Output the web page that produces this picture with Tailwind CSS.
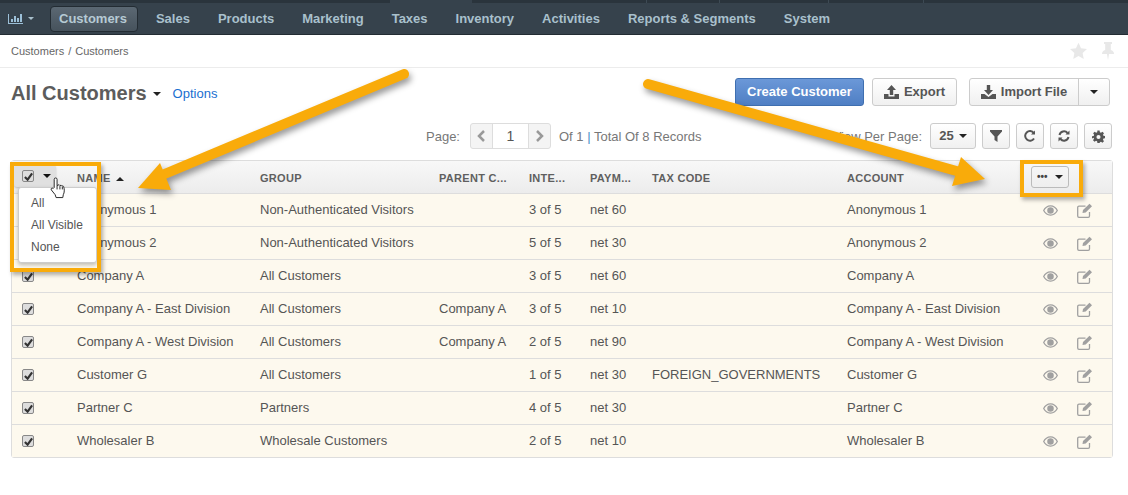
<!DOCTYPE html>
<html lang="en">
<head>
    <meta charset="utf-8">
    <title>All Customers</title>
    <script src="https://cdn.jsdelivr.net/npm/@tailwindcss/browser@4"></script>
</head>
<body class="bg-white font-['Liberation_Sans',Arial,sans-serif] text-[13px] text-[#555]">
<div class="relative w-[1128px] h-[495px] overflow-hidden">
    <!-- strip above the nav -->
    <div class="h-[3px] flex bg-[#2a343c]">
        <span class="w-[390px]"></span>
        <span class="w-[82px] bg-[#36424c]"></span>
        <span class="w-[175px] border-r border-[#3d4a54]"></span>
        <span class="w-[73px] border-r border-[#3d4a54]"></span>
        <span class="w-[109px] border-r border-[#3d4a54]"></span>
        <span class="w-[95px] border-r border-[#3d4a54]"></span>
    </div>
    <!-- top nav -->
    <nav class="h-[32px] bg-[#36424c] border-b border-[#232c33] flex items-center pl-[8px] font-bold text-[13px] text-[#a9c0cc]">
        <svg class="w-[15px] h-[10px] text-[#9cc0d8]" viewBox="0 0 15 10" fill="currentColor"><path d="M0 0h1v9h14v1H0zM3 5h2v3H3zM6 2h2v6H6zM9 4h2v4H9zM12 0h2v8h-2z"/></svg>
        <span class="ml-[5px] w-0 h-0 border-x-[3px] border-x-transparent border-t-[3px] border-t-[#a9c0cc]"></span>
        <span class="ml-[16px] h-[26px] pl-[8px] pr-[10px] flex items-center rounded-[4px] bg-gradient-to-b from-[#5b6873] to-[#46525c] border border-[#232c33] text-[#b6cad4]">Customers</span>
        <span class="ml-[18px]">Sales</span>
        <span class="ml-[28px]">Products</span>
        <span class="ml-[28px]">Marketing</span>
        <span class="ml-[28px]">Taxes</span>
        <span class="ml-[28px]">Inventory</span>
        <span class="ml-[28px]">Activities</span>
        <span class="ml-[28px]">Reports &amp; Segments</span>
        <span class="ml-[28px]">System</span>
    </nav>

    <!-- breadcrumb -->
    <div class="h-[33px] border-b border-[#ececec] flex items-center justify-between pl-[11px] pr-[13px] text-[11px] text-[#666]">
        <span>Customers<span class="mx-[4px]">/</span>Customers</span>
        <div class="flex items-center gap-[13px] text-[#e8e8e8]">
            <svg class="w-[19px] h-[18px]" viewBox="0 0 24 24" fill="currentColor"><path d="M12 1l3.400 7.300 7.900 1-5.800 5.400 1.500 7.900L12 18.700l-7 3.900 1.500-7.900L.7 9.300l7.900-1z"/></svg>
            <svg class="w-[14px] h-[18px]" viewBox="0 0 14 18" fill="currentColor"><path d="M3 0h8v2H9.800v6c2 .6 3.200 2 3.200 4H8l-1 6-1-6H1c0-2 1.200-3.400 3.200-4V2H3z"/></svg>
        </div>
    </div>

    <!-- title row -->
    <div class="h-[47px] flex items-center pl-[11px] pr-[18px]">
        <span class="font-bold text-[20px] text-[#5c5c5c] mt-[2px]">All Customers</span>
        <span class="ml-[6px] mt-[5px] w-0 h-0 border-x-[4px] border-x-transparent border-t-[4px] border-t-[#222]"></span>
        <a class="ml-[12px] mt-[4px] text-[#1a6fd0] text-[13px]">Options</a>
        <div class="ml-auto flex items-center">
            <button class="h-[28px] w-[129px] rounded-[3px] border border-[#3f6fb0] bg-gradient-to-b from-[#6b98d8] to-[#4f7fc4] text-white font-bold text-[13px]">Create Customer</button>
            <button class="ml-[8px] h-[28px] w-[85px] rounded-[3px] border border-[#ccc] bg-gradient-to-b from-white to-[#f0f0f0] flex items-center justify-center gap-[5px] text-[#555] font-bold text-[13px]">
                <svg class="w-[15px] h-[14px]" viewBox="0 0 15 14" fill="currentColor"><path d="M7.500 0l4.500 5H9.200v5H5.800V5H3zM0 9h4.500v2.500h6V9H15v5H0z"/></svg>Export
            </button>
            <div class="ml-[12px] h-[28px] w-[141px] flex rounded-[3px] border border-[#ccc] bg-gradient-to-b from-white to-[#f0f0f0] text-[#555] font-bold text-[13px]">
                <span class="w-[109px] flex items-center justify-center gap-[5px] border-r border-[#ccc]">
                    <svg class="w-[15px] h-[14px]" viewBox="0 0 15 14" fill="currentColor"><path d="M5.800 0h3.400v5H12L7.500 10 3 5h2.800zM0 9h3.500l4 3 4-3H15v5H0z"/></svg>Import File
                </span>
                <span class="flex-1 flex items-center justify-center"><span class="w-0 h-0 border-x-[4px] border-x-transparent border-t-[4px] border-t-[#222]"></span></span>
            </div>
        </div>
    </div>

    <!-- pager row -->
    <div class="h-[42px] flex items-center pr-[16px] text-[13px] text-[#777]">
        <span class="ml-[426px] mt-[2px]">Page:</span>
        <div class="ml-[10px] h-[26px] w-[81px] flex rounded-[3px] border border-[#ddd] bg-[#f4f4f4] text-[#999]">
            <span class="w-[21px] flex items-center justify-center">
                <svg class="w-[9px] h-[12px]" viewBox="0 0 9 12" fill="none" stroke="currentColor" stroke-width="2.500"><path d="M7 1L2 6l5 5"/></svg>
            </span>
            <span class="flex-1 bg-white border-x border-[#ddd] flex items-center justify-center text-[#555] text-[14px]">1</span>
            <span class="w-[21px] flex items-center justify-center">
                <svg class="w-[9px] h-[12px]" viewBox="0 0 9 12" fill="none" stroke="currentColor" stroke-width="2.500"><path d="M2 1l5 5-5 5"/></svg>
            </span>
        </div>
        <span class="ml-[8px] mt-[2px]">Of 1 <span class="text-[#4a90c8]">|</span> Total Of 8 Records</span>
        <span class="ml-auto mt-[2px]">View Per Page:</span>
        <button class="ml-[8px] h-[26px] w-[46px] rounded-[3px] border border-[#ccc] bg-gradient-to-b from-white to-[#f0f0f0] flex items-center justify-center gap-[5px] font-bold text-[#555]">25<span class="w-0 h-0 border-x-[4px] border-x-transparent border-t-[4px] border-t-[#222]"></span></button>
        <button class="ml-[6px] h-[26px] w-[28px] rounded-[3px] border border-[#ccc] bg-gradient-to-b from-white to-[#f0f0f0] flex items-center justify-center text-[#555]">
            <svg class="w-[12px] h-[12px]" viewBox="0 0 12 12" fill="currentColor"><path d="M0 0h12v1.500L7.500 6.500V12l-3-2V6.500L0 1.500z"/></svg>
        </button>
        <button class="ml-[6px] h-[26px] w-[28px] rounded-[3px] border border-[#ccc] bg-gradient-to-b from-white to-[#f0f0f0] flex items-center justify-center text-[#555]">
            <svg class="w-[12px] h-[12px]" viewBox="0 0 12 12" fill="none" stroke="currentColor" stroke-width="2"><path d="M10 8.500A4.800 4.800 0 1 1 9.800 3"/><path d="M11 .5v4H7z" fill="currentColor" stroke="none"/></svg>
        </button>
        <button class="ml-[6px] h-[26px] w-[28px] rounded-[3px] border border-[#ccc] bg-gradient-to-b from-white to-[#f0f0f0] flex items-center justify-center text-[#555]">
            <svg class="w-[12px] h-[12px]" viewBox="0 0 12 12" fill="none" stroke="currentColor" stroke-width="2"><path d="M1.500 5A4.600 4.600 0 0 1 9.500 3M10.500 7A4.600 4.600 0 0 1 2.500 9"/><path d="M11.500.5v4h-4zM.5 11.500v-4h4z" fill="currentColor" stroke="none"/></svg>
        </button>
        <button class="ml-[6px] h-[26px] w-[28px] rounded-[3px] border border-[#ccc] bg-gradient-to-b from-white to-[#f0f0f0] flex items-center justify-center text-[#555]">
            <svg class="w-[13px] h-[13px]" viewBox="0 0 24 24" fill="currentColor"><path fill-rule="evenodd" d="M10 1h4l.6 3.200 2 .8L19.300 3.200l2.800 2.800-1.800 2.700.8 2 3.100.6v4l-3.100.6-.8 2 1.800 2.700-2.800 2.800-2.700-1.800-2 .8L14 24h-4l-.6-3.200-2-.8-2.700 1.800-2.800-2.800 1.800-2.700-.8-2L0 15.500v-4l3.100-.6.800-2L2.100 6l2.800-2.800L7.600 5l2-.8zM12 9a3.800 3.800 0 1 0 0 7.600A3.800 3.800 0 0 0 12 9z"/></svg>
        </button>
    </div>

    <!-- grid -->
    <div class="mt-[3px] mx-[11px] w-[1102px] border border-[#ddd] rounded-[3px] text-[13px] text-[#555]">
        <div class="h-[33px] flex items-center bg-gradient-to-b from-[#f8f8f8] to-[#ececec] border-b border-[#ddd] text-[11px] font-bold tracking-[.3px] text-[#5f5f5f] pt-[3px]">
            <span class="w-[65px] relative self-stretch">
                <span class="absolute left-[2px] top-[1px] w-[42px] h-[22px] rounded-[3px] bg-[#e0e0e0] shadow-[0_1px_2px_rgba(0,0,0,.2)] flex items-center pl-[8px] gap-[9px]">
                    <span class="w-[12px] h-[12px] rounded-[2px] bg-[#ddd] border border-[#888] flex items-center justify-center text-[#333]"><svg class="w-[9px] h-[9px]" viewBox="0 0 10 10" fill="none" stroke="currentColor" stroke-width="2.400"><path d="M1 5.500L4 8.500 9 1.500"/></svg></span>
                    <span class="w-0 h-0 border-x-[4px] border-x-transparent border-t-[4px] border-t-[#111]"></span>
                </span>
            </span>
            <span class="w-[183px] flex items-center gap-[5px]">NAME <span class="w-0 h-0 border-x-[4px] border-x-transparent border-b-[4px] border-b-[#222]"></span></span>
            <span class="w-[179px]">GROUP</span>
            <span class="w-[90px]">PARENT C...</span>
            <span class="w-[61px]">INTE...</span>
            <span class="w-[62px]">PAYM...</span>
            <span class="w-[195px]">TAX CODE</span>
            <span class="w-[184px]">ACCOUNT</span>
            <span class="w-[38px] h-[22px] -mt-[4px] rounded-[3px] border border-[#bbb] flex items-center justify-between px-[5px]"><span class="text-[#444] text-[10px] leading-[0] tracking-normal">•••</span><span class="w-0 h-0 border-x-[4px] border-x-transparent border-t-[4px] border-t-[#222]"></span></span>
        </div>

        <!-- rows -->
        <div class="h-[33px] flex items-center bg-[#fdf9ee] border-b border-[#ddd]">
            <span class="w-[65px]"></span><span class="w-[183px]">Anonymous 1</span><span class="w-[179px]">Non-Authenticated Visitors</span><span class="w-[90px]"></span><span class="w-[61px]">3 of 5</span><span class="w-[62px]">net 60</span><span class="w-[195px]"></span><span class="w-[196px]">Anonymous 1</span>
            <svg class="w-[15px] h-[11px] text-[#a0a0a0]" viewBox="0 0 16 11" fill="currentColor"><path fill-rule="evenodd" d="M8 0c3.500 0 6.500 2.200 8 5.500C14.500 8.800 11.500 11 8 11S1.500 8.800 0 5.500C1.500 2.200 4.500 0 8 0zm0 2a3.500 3.500 0 1 0 0 7 3.500 3.500 0 0 0 0-7zM1.500 5.500C2.600 7.800 5 9.800 8 9.800s5.400-2 6.500-4.300C13.400 3.200 11 1.200 8 1.200S2.600 3.200 1.500 5.500z"/></svg>
            <svg class="ml-[19px] w-[16px] h-[15px] text-[#a0a0a0]" viewBox="0 0 16 15" fill="none" stroke="currentColor" stroke-width="1.300"><path d="M12.500 9v4a1.300 1.300 0 0 1-1.300 1.300H2A1.300 1.300 0 0 1 .7 13V4.500A1.300 1.300 0 0 1 2 3.200h6.500"/><path d="M6 7l6.500-6.300 2.500 2.500L8.700 9.500 5.500 10z" fill="currentColor" stroke="none"/></svg>
        </div>
        <div class="h-[33px] flex items-center bg-[#fdf9ee] border-b border-[#ddd]">
            <span class="w-[65px]"></span><span class="w-[183px]">Anonymous 2</span><span class="w-[179px]">Non-Authenticated Visitors</span><span class="w-[90px]"></span><span class="w-[61px]">5 of 5</span><span class="w-[62px]">net 30</span><span class="w-[195px]"></span><span class="w-[196px]">Anonymous 2</span>
            <svg class="w-[15px] h-[11px] text-[#a0a0a0]" viewBox="0 0 16 11" fill="currentColor"><path fill-rule="evenodd" d="M8 0c3.500 0 6.500 2.200 8 5.500C14.500 8.800 11.500 11 8 11S1.500 8.800 0 5.500C1.500 2.200 4.500 0 8 0zm0 2a3.500 3.500 0 1 0 0 7 3.500 3.500 0 0 0 0-7zM1.500 5.500C2.600 7.800 5 9.800 8 9.800s5.400-2 6.500-4.300C13.400 3.200 11 1.200 8 1.200S2.600 3.200 1.500 5.500z"/></svg>
            <svg class="ml-[19px] w-[16px] h-[15px] text-[#a0a0a0]" viewBox="0 0 16 15" fill="none" stroke="currentColor" stroke-width="1.300"><path d="M12.500 9v4a1.300 1.300 0 0 1-1.300 1.300H2A1.300 1.300 0 0 1 .7 13V4.500A1.300 1.300 0 0 1 2 3.200h6.500"/><path d="M6 7l6.500-6.300 2.500 2.500L8.700 9.500 5.500 10z" fill="currentColor" stroke="none"/></svg>
        </div>
        <div class="h-[33px] flex items-center bg-[#fdf9ee] border-b border-[#ddd]">
            <span class="w-[65px] pl-[10px] flex"><span class="w-[12px] h-[12px] rounded-[2px] bg-[#ddd] border border-[#888] flex items-center justify-center text-[#333]"><svg class="w-[9px] h-[9px]" viewBox="0 0 10 10" fill="none" stroke="currentColor" stroke-width="2.400"><path d="M1 5.500L4 8.500 9 1.500"/></svg></span></span><span class="w-[183px]">Company A</span><span class="w-[179px]">All Customers</span><span class="w-[90px]"></span><span class="w-[61px]">3 of 5</span><span class="w-[62px]">net 60</span><span class="w-[195px]"></span><span class="w-[196px]">Company A</span>
            <svg class="w-[15px] h-[11px] text-[#a0a0a0]" viewBox="0 0 16 11" fill="currentColor"><path fill-rule="evenodd" d="M8 0c3.500 0 6.500 2.200 8 5.500C14.500 8.800 11.500 11 8 11S1.500 8.800 0 5.500C1.500 2.200 4.500 0 8 0zm0 2a3.500 3.500 0 1 0 0 7 3.500 3.500 0 0 0 0-7zM1.500 5.500C2.600 7.800 5 9.800 8 9.800s5.400-2 6.500-4.300C13.400 3.200 11 1.200 8 1.200S2.600 3.200 1.500 5.500z"/></svg>
            <svg class="ml-[19px] w-[16px] h-[15px] text-[#a0a0a0]" viewBox="0 0 16 15" fill="none" stroke="currentColor" stroke-width="1.300"><path d="M12.500 9v4a1.300 1.300 0 0 1-1.300 1.300H2A1.300 1.300 0 0 1 .7 13V4.500A1.300 1.300 0 0 1 2 3.200h6.500"/><path d="M6 7l6.500-6.300 2.500 2.500L8.700 9.500 5.500 10z" fill="currentColor" stroke="none"/></svg>
        </div>
        <div class="h-[33px] flex items-center bg-[#fdf9ee] border-b border-[#ddd]">
            <span class="w-[65px] pl-[10px] flex"><span class="w-[12px] h-[12px] rounded-[2px] bg-[#ddd] border border-[#888] flex items-center justify-center text-[#333]"><svg class="w-[9px] h-[9px]" viewBox="0 0 10 10" fill="none" stroke="currentColor" stroke-width="2.400"><path d="M1 5.500L4 8.500 9 1.500"/></svg></span></span><span class="w-[183px]">Company A - East Division</span><span class="w-[179px]">All Customers</span><span class="w-[90px]">Company A</span><span class="w-[61px]">3 of 5</span><span class="w-[62px]">net 10</span><span class="w-[195px]"></span><span class="w-[196px]">Company A - East Division</span>
            <svg class="w-[15px] h-[11px] text-[#a0a0a0]" viewBox="0 0 16 11" fill="currentColor"><path fill-rule="evenodd" d="M8 0c3.500 0 6.500 2.200 8 5.500C14.500 8.800 11.500 11 8 11S1.500 8.800 0 5.500C1.500 2.200 4.500 0 8 0zm0 2a3.500 3.500 0 1 0 0 7 3.500 3.500 0 0 0 0-7zM1.500 5.500C2.600 7.800 5 9.800 8 9.800s5.400-2 6.500-4.300C13.400 3.200 11 1.200 8 1.200S2.600 3.200 1.500 5.500z"/></svg>
            <svg class="ml-[19px] w-[16px] h-[15px] text-[#a0a0a0]" viewBox="0 0 16 15" fill="none" stroke="currentColor" stroke-width="1.300"><path d="M12.500 9v4a1.300 1.300 0 0 1-1.300 1.300H2A1.300 1.300 0 0 1 .7 13V4.500A1.300 1.300 0 0 1 2 3.200h6.500"/><path d="M6 7l6.500-6.300 2.500 2.500L8.700 9.500 5.500 10z" fill="currentColor" stroke="none"/></svg>
        </div>
        <div class="h-[33px] flex items-center bg-[#fdf9ee] border-b border-[#ddd]">
            <span class="w-[65px] pl-[10px] flex"><span class="w-[12px] h-[12px] rounded-[2px] bg-[#ddd] border border-[#888] flex items-center justify-center text-[#333]"><svg class="w-[9px] h-[9px]" viewBox="0 0 10 10" fill="none" stroke="currentColor" stroke-width="2.400"><path d="M1 5.500L4 8.500 9 1.500"/></svg></span></span><span class="w-[183px]">Company A - West Division</span><span class="w-[179px]">All Customers</span><span class="w-[90px]">Company A</span><span class="w-[61px]">2 of 5</span><span class="w-[62px]">net 90</span><span class="w-[195px]"></span><span class="w-[196px]">Company A - West Division</span>
            <svg class="w-[15px] h-[11px] text-[#a0a0a0]" viewBox="0 0 16 11" fill="currentColor"><path fill-rule="evenodd" d="M8 0c3.500 0 6.500 2.200 8 5.500C14.500 8.800 11.500 11 8 11S1.500 8.800 0 5.500C1.500 2.200 4.500 0 8 0zm0 2a3.500 3.500 0 1 0 0 7 3.500 3.500 0 0 0 0-7zM1.500 5.500C2.600 7.800 5 9.800 8 9.800s5.400-2 6.500-4.300C13.400 3.200 11 1.200 8 1.200S2.600 3.200 1.500 5.500z"/></svg>
            <svg class="ml-[19px] w-[16px] h-[15px] text-[#a0a0a0]" viewBox="0 0 16 15" fill="none" stroke="currentColor" stroke-width="1.300"><path d="M12.500 9v4a1.300 1.300 0 0 1-1.300 1.300H2A1.300 1.300 0 0 1 .7 13V4.500A1.300 1.300 0 0 1 2 3.200h6.500"/><path d="M6 7l6.500-6.300 2.500 2.500L8.700 9.500 5.500 10z" fill="currentColor" stroke="none"/></svg>
        </div>
        <div class="h-[33px] flex items-center bg-[#fdf9ee] border-b border-[#ddd]">
            <span class="w-[65px] pl-[10px] flex"><span class="w-[12px] h-[12px] rounded-[2px] bg-[#ddd] border border-[#888] flex items-center justify-center text-[#333]"><svg class="w-[9px] h-[9px]" viewBox="0 0 10 10" fill="none" stroke="currentColor" stroke-width="2.400"><path d="M1 5.500L4 8.500 9 1.500"/></svg></span></span><span class="w-[183px]">Customer G</span><span class="w-[179px]">All Customers</span><span class="w-[90px]"></span><span class="w-[61px]">1 of 5</span><span class="w-[62px]">net 30</span><span class="w-[195px]">FOREIGN_GOVERNMENTS</span><span class="w-[196px]">Customer G</span>
            <svg class="w-[15px] h-[11px] text-[#a0a0a0]" viewBox="0 0 16 11" fill="currentColor"><path fill-rule="evenodd" d="M8 0c3.500 0 6.500 2.200 8 5.500C14.500 8.800 11.500 11 8 11S1.500 8.800 0 5.500C1.500 2.200 4.500 0 8 0zm0 2a3.500 3.500 0 1 0 0 7 3.500 3.500 0 0 0 0-7zM1.500 5.500C2.600 7.800 5 9.800 8 9.800s5.400-2 6.500-4.300C13.400 3.200 11 1.200 8 1.200S2.600 3.200 1.500 5.500z"/></svg>
            <svg class="ml-[19px] w-[16px] h-[15px] text-[#a0a0a0]" viewBox="0 0 16 15" fill="none" stroke="currentColor" stroke-width="1.300"><path d="M12.500 9v4a1.300 1.300 0 0 1-1.300 1.300H2A1.300 1.300 0 0 1 .7 13V4.500A1.300 1.300 0 0 1 2 3.200h6.500"/><path d="M6 7l6.500-6.300 2.500 2.500L8.700 9.500 5.500 10z" fill="currentColor" stroke="none"/></svg>
        </div>
        <div class="h-[33px] flex items-center bg-[#fdf9ee] border-b border-[#ddd]">
            <span class="w-[65px] pl-[10px] flex"><span class="w-[12px] h-[12px] rounded-[2px] bg-[#ddd] border border-[#888] flex items-center justify-center text-[#333]"><svg class="w-[9px] h-[9px]" viewBox="0 0 10 10" fill="none" stroke="currentColor" stroke-width="2.400"><path d="M1 5.500L4 8.500 9 1.500"/></svg></span></span><span class="w-[183px]">Partner C</span><span class="w-[179px]">Partners</span><span class="w-[90px]"></span><span class="w-[61px]">4 of 5</span><span class="w-[62px]">net 30</span><span class="w-[195px]"></span><span class="w-[196px]">Partner C</span>
            <svg class="w-[15px] h-[11px] text-[#a0a0a0]" viewBox="0 0 16 11" fill="currentColor"><path fill-rule="evenodd" d="M8 0c3.500 0 6.500 2.200 8 5.500C14.500 8.800 11.500 11 8 11S1.500 8.800 0 5.500C1.500 2.200 4.500 0 8 0zm0 2a3.500 3.500 0 1 0 0 7 3.500 3.500 0 0 0 0-7zM1.500 5.500C2.600 7.800 5 9.800 8 9.800s5.400-2 6.500-4.300C13.400 3.200 11 1.200 8 1.200S2.600 3.200 1.500 5.500z"/></svg>
            <svg class="ml-[19px] w-[16px] h-[15px] text-[#a0a0a0]" viewBox="0 0 16 15" fill="none" stroke="currentColor" stroke-width="1.300"><path d="M12.500 9v4a1.300 1.300 0 0 1-1.300 1.300H2A1.300 1.300 0 0 1 .7 13V4.500A1.300 1.300 0 0 1 2 3.200h6.500"/><path d="M6 7l6.500-6.300 2.500 2.500L8.700 9.500 5.500 10z" fill="currentColor" stroke="none"/></svg>
        </div>
        <div class="h-[32px] flex items-center bg-[#fdf9ee]">
            <span class="w-[65px] pl-[10px] flex"><span class="w-[12px] h-[12px] rounded-[2px] bg-[#ddd] border border-[#888] flex items-center justify-center text-[#333]"><svg class="w-[9px] h-[9px]" viewBox="0 0 10 10" fill="none" stroke="currentColor" stroke-width="2.400"><path d="M1 5.500L4 8.500 9 1.500"/></svg></span></span><span class="w-[183px]">Wholesaler B</span><span class="w-[179px]">Wholesale Customers</span><span class="w-[90px]"></span><span class="w-[61px]">2 of 5</span><span class="w-[62px]">net 10</span><span class="w-[195px]"></span><span class="w-[196px]">Wholesaler B</span>
            <svg class="w-[15px] h-[11px] text-[#a0a0a0]" viewBox="0 0 16 11" fill="currentColor"><path fill-rule="evenodd" d="M8 0c3.500 0 6.500 2.200 8 5.500C14.500 8.800 11.500 11 8 11S1.500 8.800 0 5.500C1.500 2.200 4.500 0 8 0zm0 2a3.500 3.500 0 1 0 0 7 3.500 3.500 0 0 0 0-7zM1.500 5.500C2.600 7.800 5 9.800 8 9.800s5.400-2 6.500-4.300C13.400 3.200 11 1.200 8 1.200S2.600 3.200 1.500 5.500z"/></svg>
            <svg class="ml-[19px] w-[16px] h-[15px] text-[#a0a0a0]" viewBox="0 0 16 15" fill="none" stroke="currentColor" stroke-width="1.300"><path d="M12.500 9v4a1.300 1.300 0 0 1-1.300 1.300H2A1.300 1.300 0 0 1 .7 13V4.500A1.300 1.300 0 0 1 2 3.200h6.500"/><path d="M6 7l6.500-6.300 2.500 2.500L8.700 9.500 5.500 10z" fill="currentColor" stroke="none"/></svg>
        </div>
    </div>

    <!-- dropdown menu over the first rows -->
    <div class="absolute left-[18px] top-[187px] w-[79px] h-[76px] bg-white rounded-[3px] border border-[#ccc] shadow-[0_2px_4px_rgba(0,0,0,.25)] pl-[12px] pt-[4px] text-[12px] leading-[22px] text-[#555]">
        <div>All</div>
        <div>All Visible</div>
        <div>None</div>
    </div>

    <!-- annotation boxes and arrows drawn on the screenshot -->
    <div class="absolute left-[10px] top-[162px] w-[91px] h-[110px] border-[4px] border-[#f9ab0a] shadow-[2px_3px_4px_rgba(0,0,0,.3)]"></div>
    <div class="absolute left-[1020px] top-[160px] w-[63px] h-[37px] border-[4px] border-[#f9ab0a] shadow-[2px_3px_4px_rgba(0,0,0,.3)]"></div>
    <svg class="absolute left-0 top-0 w-[1128px] h-[495px] pointer-events-none drop-shadow-[2px_4px_3px_rgba(0,0,0,.4)]" viewBox="0 0 1128 495">
        <path d="M404 74L155 178" stroke="#f9ab0a" stroke-width="10" stroke-linecap="round" fill="none"/>
        <path d="M138 188L160 163 171 190z" fill="#f9ab0a"/>
        <path d="M648 84L960 172" stroke="#f9ab0a" stroke-width="10" stroke-linecap="round" fill="none"/>
        <path d="M985 179L961 157 952 186z" fill="#f9ab0a"/>
    </svg>
    <!-- hand cursor -->
    <svg class="absolute left-[50px] top-[177px] w-[17px] h-[22px]" viewBox="0 0 17 23" fill="#fff" stroke="#222" stroke-width="1"><path d="M4 11V2.500a1.500 1.500 0 0 1 3 0V9l1-.5a1.300 1.300 0 0 1 2 .5 1.300 1.300 0 0 1 2 .5 1.300 1.300 0 0 1 2 1c.8 2 .8 6-.5 8l-.5 3H6l-1-3-4-5c-1-1.500.8-2.500 2-1.500z"/><path d="M7 9v4M10 9.500V13M12.500 10v3" fill="none"/></svg>
</div>
</body>
</html>
